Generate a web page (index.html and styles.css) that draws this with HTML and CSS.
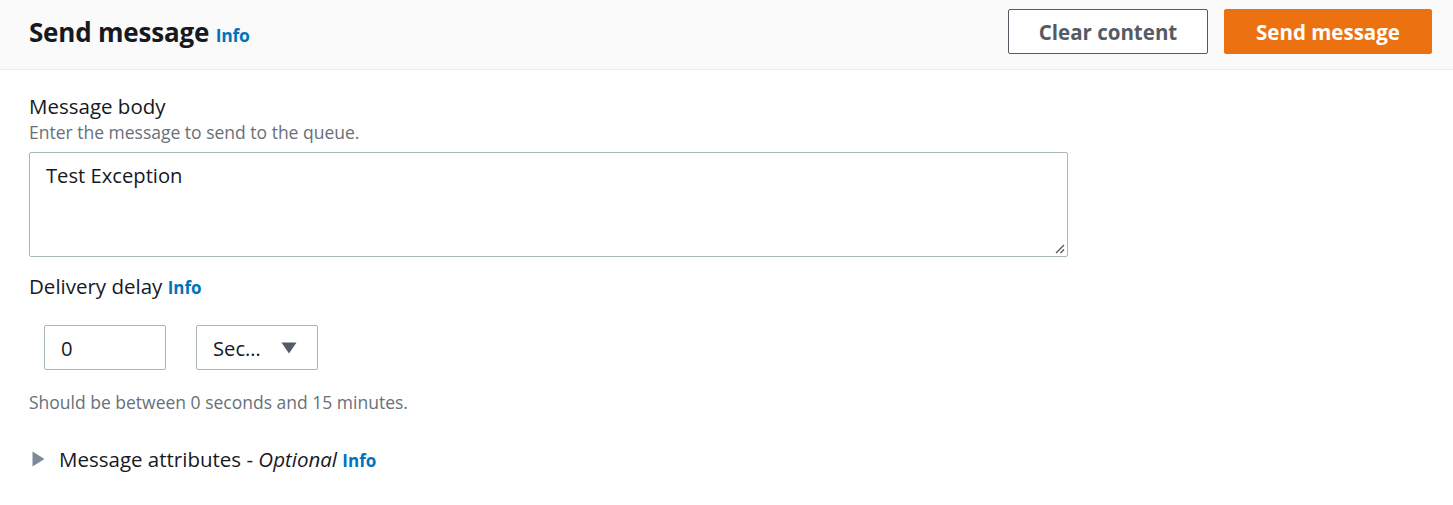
FILE: index.html
```html
<!DOCTYPE html>
<html lang="en">
<head>
<meta charset="utf-8">
<title>Send message</title>
<link rel="stylesheet" href="styles.css">
</head>
<body>
<div class="page">
  <header class="header">
    <h1 class="title">Send message <a class="info info-lg" href="#">Info</a></h1>
    <div class="actions">
      <button class="btn btn-normal">Clear content</button>
      <button class="btn btn-primary">Send message</button>
    </div>
  </header>
  <main class="content">
    <div class="field">
      <div class="label">Message body</div>
      <div class="desc">Enter the message to send to the queue.</div>
      <div class="textarea-wrap">
        <div class="textarea">Test Exception</div>
        <svg class="grip" width="11" height="11" viewBox="0 0 11 11"><path d="M10 2 L2 10 M10 6.5 L6.5 10" stroke="#555" stroke-width="1.3" fill="none"/></svg>
      </div>
    </div>
    <div class="field field-delay">
      <div class="label">Delivery delay <a class="info" href="#">Info</a></div>
      <div class="delay-row">
        <div class="input">0</div>
        <div class="select"><span>Sec…</span><svg width="16" height="12" viewBox="0 0 16 12"><path d="M0.5 0.5 H15.5 L8 11.5 Z" fill="#545b64"/></svg></div>
      </div>
      <div class="desc hint">Should be between 0 seconds and 15 minutes.</div>
    </div>
    <div class="expander">
      <svg class="caret" width="13" height="16" viewBox="0 0 13 16"><path d="M0.5 0.5 L12.5 8 L0.5 15.5 Z" fill="#7d8998"/></svg>
      <span>Message attributes - <em>Optional</em> <a class="info" href="#">Info</a></span>
    </div>
  </main>
</div>
</body>
</html>
```
FILE: styles.css
```css
* { box-sizing: border-box; }
html, body { margin: 0; padding: 0; background: #fff; }
body {
  font-family: "Open Sans", "Noto Sans", "Liberation Sans", sans-serif;
  color: #16191f;
}
.header {
  height: 70px;
  background: #fafafa;
  border-bottom: 1px solid #eaeded;
  display: flex;
  align-items: center;
  justify-content: space-between;
  padding: 0 21px 6px 29px;
}
.title {
  margin: 0;
  font-size: 26px;
  font-weight: 700;
  letter-spacing: -0.2px;
}
.info {
  color: #0073bb;
  text-decoration: none;
  font-weight: 700;
  font-size: 17px;
}
.info-lg { font-size: 17.5px; }
.actions { display: flex; gap: 16px; }
.btn {
  height: 45px;
  border-radius: 2px;
  font-family: inherit;
  font-size: 20.5px;
  font-weight: 700;
  padding: 0;
  cursor: pointer;
}
.btn-normal {
  width: 200px;
  background: #fff;
  border: 1px solid #545b64;
  color: #545b64;
}
.btn-primary {
  width: 208px;
  background: #ec7211;
  border: 1px solid #ec7211;
  color: #fff;
}
.content { padding: 23px 29px 0 29px; }
.label { font-size: 20.5px; line-height: 26px; }
.desc { font-size: 17.5px; color: #687078; line-height: 26px; }
.textarea-wrap {
  position: relative;
  width: 1039px;
  margin-top: 7px;
}
.textarea {
  height: 105px;
  border: 1px solid #aab7b8;
  border-radius: 2px;
  padding: 7px 16px;
  font-size: 20.2px;
  line-height: 30px;
}
.grip { position: absolute; right: 3px; bottom: 3px; }
.field-delay { margin-top: 16px; }
.delay-row {
  display: flex;
  gap: 30px;
  margin: 24px 0 0 15px;
}
.input, .select {
  width: 122px;
  height: 45px;
  border: 1px solid #aab7b8;
  border-radius: 2px;
  font-size: 20.2px;
  display: flex;
  align-items: center;
  padding: 0 16px;
}
.select { justify-content: space-between; padding-right: 20px; }
.hint { margin-top: 19px; }
.expander {
  margin-top: 31px;
  height: 26px;
  display: flex;
  align-items: center;
  gap: 14px;
  font-size: 20.5px;
  padding-left: 3px;
}
.expander em { font-style: italic; }
```
